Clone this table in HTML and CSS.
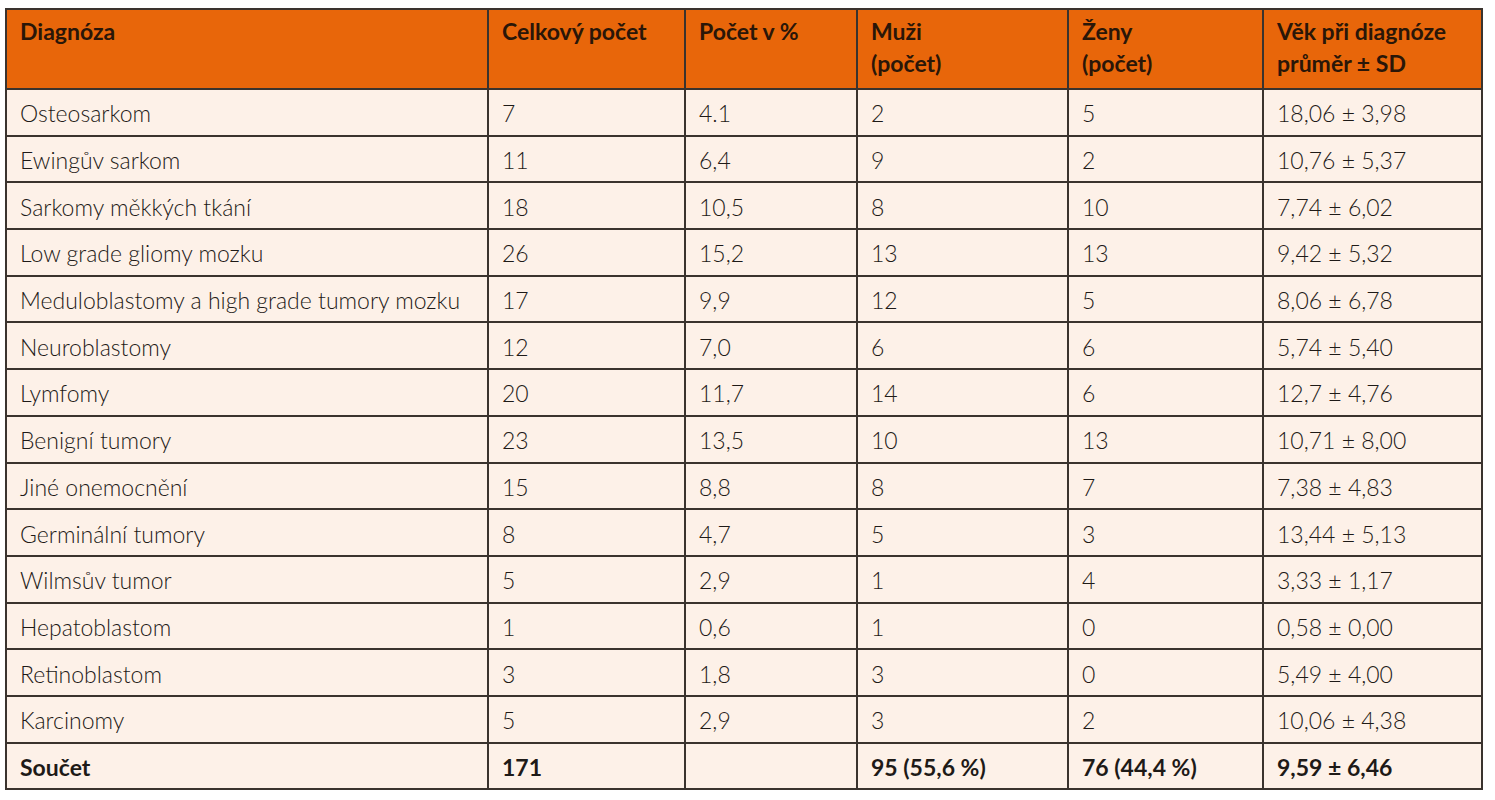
FILE: index.html
```html
<!DOCTYPE html>
<html lang="cs">
<head>
<meta charset="utf-8">
<title>Diagnózy</title>
<link rel="stylesheet" href="styles.css">
</head>
<body>
<table class="data">
  <colgroup>
    <col class="c1"><col class="c2"><col class="c3"><col class="c4"><col class="c5"><col class="c6">
  </colgroup>
  <thead>
    <tr>
      <th>Diagnóza</th>
      <th>Celkový počet</th>
      <th>Počet v %</th>
      <th>Muži<br>(počet)</th>
      <th>Ženy<br>(počet)</th>
      <th>Věk při diagnóze<br>průměr ± SD</th>
    </tr>
  </thead>
  <tbody>
    <tr><td>Osteosarkom</td><td>7</td><td>4.1</td><td>2</td><td>5</td><td>18,06 ± 3,98</td></tr>
    <tr><td>Ewingův sarkom</td><td>11</td><td>6,4</td><td>9</td><td>2</td><td>10,76 ± 5,37</td></tr>
    <tr><td>Sarkomy měkkých tkání</td><td>18</td><td>10,5</td><td>8</td><td>10</td><td>7,74 ± 6,02</td></tr>
    <tr><td>Low grade gliomy mozku</td><td>26</td><td>15,2</td><td>13</td><td>13</td><td>9,42 ± 5,32</td></tr>
    <tr><td>Meduloblastomy a high grade tumory mozku</td><td>17</td><td>9,9</td><td>12</td><td>5</td><td>8,06 ± 6,78</td></tr>
    <tr><td>Neuroblastomy</td><td>12</td><td>7,0</td><td>6</td><td>6</td><td>5,74 ± 5,40</td></tr>
    <tr><td>Lymfomy</td><td>20</td><td>11,7</td><td>14</td><td>6</td><td>12,7 ± 4,76</td></tr>
    <tr><td>Benigní tumory</td><td>23</td><td>13,5</td><td>10</td><td>13</td><td>10,71 ± 8,00</td></tr>
    <tr><td>Jiné onemocnění</td><td>15</td><td>8,8</td><td>8</td><td>7</td><td>7,38 ± 4,83</td></tr>
    <tr><td>Germinální tumory</td><td>8</td><td>4,7</td><td>5</td><td>3</td><td>13,44 ± 5,13</td></tr>
    <tr><td>Wilmsův tumor</td><td>5</td><td>2,9</td><td>1</td><td>4</td><td>3,33 ± 1,17</td></tr>
    <tr><td>Hepatoblastom</td><td>1</td><td>0,6</td><td>1</td><td>0</td><td>0,58 ± 0,00</td></tr>
    <tr><td>Retinoblastom</td><td>3</td><td>1,8</td><td>3</td><td>0</td><td>5,49 ± 4,00</td></tr>
    <tr><td>Karcinomy</td><td>5</td><td>2,9</td><td>3</td><td>2</td><td>10,06 ± 4,38</td></tr>
    <tr class="total"><td>Součet</td><td>171</td><td></td><td>95 (55,6 %)</td><td>76 (44,4 %)</td><td>9,59 ± 6,46</td></tr>
  </tbody>
</table>
</body>
</html>
```

FILE: styles.css
```css
html, body {
  margin: 0;
  padding: 0;
  background: #ffffff;
}

body {
  padding: 8px 0 0 5px;
  font-family: Lato, "Liberation Sans", sans-serif;
}

.data {
  border-collapse: collapse;
  table-layout: fixed;
  width: 1476px;
  color: #1e1a17;
  font-size: 23px;
}

.c1 { width: 482px; }
.c2 { width: 197px; }
.c3 { width: 172px; }
.c4 { width: 211px; }
.c5 { width: 195px; }
.c6 { width: 219px; }

.data th,
.data td {
  border: 2px solid #3a332e;
  padding: 0 12px 0 13px;
  text-align: left;
}

.data thead tr {
  height: 80px;
}

.data th {
  background: #e8660a;
  color: #2a1608;
  font-weight: 700;
  vertical-align: top;
  line-height: 32px;
  padding-top: 5px;
  padding-bottom: 0;
}

.data tbody tr {
  height: 46.7px;
}

.data td {
  background: #fdf1e8;
  font-weight: 300;
  vertical-align: middle;
  line-height: 26px;
  padding-top: 2px;
}

.data .total td {
  font-weight: 700;
}
```
